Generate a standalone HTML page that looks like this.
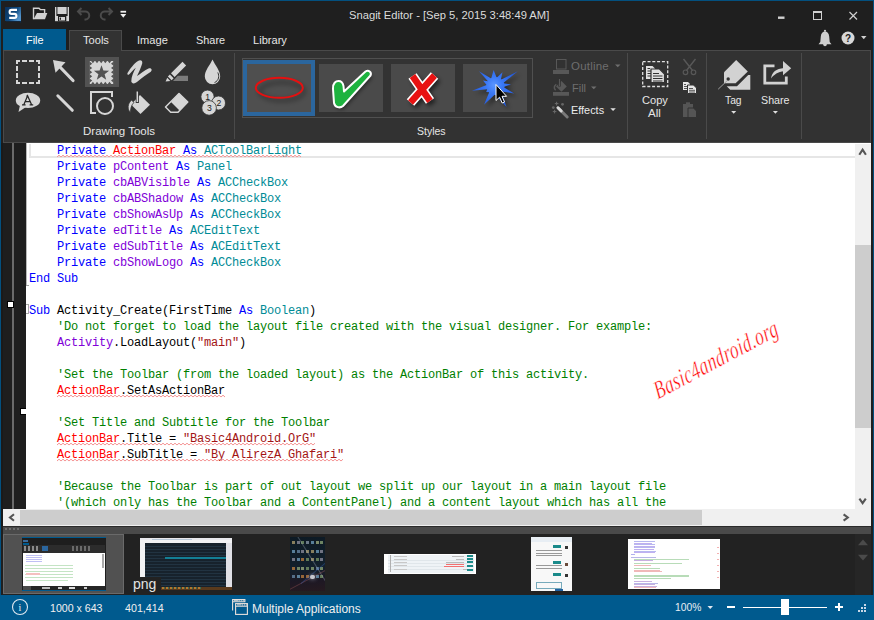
<!DOCTYPE html>
<html><head><meta charset="utf-8">
<style>
*{margin:0;padding:0;box-sizing:border-box}
html,body{width:874px;height:620px;overflow:hidden;background:#1f1f1f;font-family:"Liberation Sans",sans-serif}
.a{position:absolute}
.t{position:absolute;color:#e6e6e6;white-space:nowrap;line-height:1;font-size:11px}
#code{position:absolute;left:26px;top:143px;width:829px;height:366px;background:#fff;overflow:hidden}
.ln{position:absolute;left:3px;height:16px;font-family:"Liberation Mono",monospace;font-size:12px;letter-spacing:-0.2px;line-height:16px;white-space:pre;color:#000}
.k{color:#0000ff}.r{color:#ff0000}.p{color:#8000d8}.c{color:#008b96}.g{color:#008000}.s{color:#a31515}
svg{position:absolute;left:0;top:0;overflow:visible}
</style></head><body>
<!-- window frame -->
<div class="a" style="left:0;top:0;width:874px;height:620px;background:#03507f"></div>
<div class="a" style="left:1px;top:1px;width:872px;height:619px;background:#1f1f1f"></div>

<!-- logo -->
<svg width="874" height="620">
<defs><linearGradient id="lg" x1="0" y1="0" x2="1" y2="0.6"><stop offset="0" stop-color="#0a3059"/><stop offset="0.6" stop-color="#0d477c"/><stop offset="1" stop-color="#5292c8"/></linearGradient></defs>
<rect x="5" y="7" width="16" height="14" fill="url(#lg)"/>
<path d="M6,21 H21 V23 L19.5,21.5 H6 Z" fill="#0a2d50"/>
<path d="M17,9.9 H11.6 Q9.6,9.9 9.6,11.9 Q9.6,13.9 11.6,13.9 H14.4 Q16.4,13.9 16.4,15.9 Q16.4,17.9 14.4,17.9 H9.2" fill="none" stroke="#fff" stroke-width="2.1"/>
</svg>
<!-- title -->
<div class="t" style="left:349px;top:10px;font-size:11.2px;color:#dcdcdc">Snagit Editor - [Sep 5, 2015 3:48:49 AM]</div>

<!-- tabs -->
<div class="a" style="left:3px;top:29px;width:63px;height:21px;background:#005a8e"></div>
<div class="t" style="left:26px;top:35px;font-size:10.9px;color:#fff">File</div>
<div class="a" style="left:69px;top:30px;width:53px;height:21px;background:#323232;border:1px solid #4a4a4a;border-bottom:none"></div>
<div class="t" style="left:83px;top:35px;font-size:11.1px">Tools</div>
<div class="t" style="left:137px;top:35px;font-size:11.1px">Image</div>
<div class="t" style="left:196px;top:35px;font-size:10.9px">Share</div>
<div class="t" style="left:253px;top:35px;font-size:11.1px">Library</div>

<!-- ribbon panel -->
<div class="a" style="left:3px;top:50px;width:868px;height:93px;background:#323232;border:1px solid #4a4a4a"></div>
<div class="a" style="left:70px;top:50px;width:51px;height:1px;background:#323232"></div>
<div class="t" style="left:83px;top:126px;font-size:11.5px">Drawing Tools</div>
<div class="t" style="left:417px;top:126px;font-size:10.5px">Styles</div>
<div class="a" style="left:234px;top:53px;width:1px;height:86px;background:#4a4a4a"></div>
<div class="a" style="left:627px;top:53px;width:1px;height:86px;background:#4a4a4a"></div>
<div class="a" style="left:706px;top:53px;width:1px;height:86px;background:#4a4a4a"></div>
<div class="a" style="left:801px;top:53px;width:1px;height:86px;background:#4a4a4a"></div>

<!-- stamp highlight -->
<div class="a" style="left:85px;top:57px;width:34px;height:30px;background:#525252"></div>

<!-- styles gallery -->
<div class="a" style="left:242px;top:58px;width:291px;height:60px;border:1px solid #505050;background:#333"></div>
<div class="a" style="left:243px;top:60px;width:72px;height:56px;background:#2b669e"></div>
<div class="a" style="left:247px;top:64px;width:64px;height:48px;background:#4f4f4f"></div>
<div class="a" style="left:319px;top:64px;width:64px;height:48px;background:#4a4a4a"></div>
<div class="a" style="left:391px;top:64px;width:64px;height:48px;background:#4a4a4a"></div>
<div class="a" style="left:463px;top:64px;width:64px;height:48px;background:#4a4a4a"></div>

<!-- outline/fill/effects text -->
<div class="t" style="left:571px;top:61px;font-size:11.5px;letter-spacing:0.2px;color:#6e6e6e">Outline</div>
<div class="t" style="left:572px;top:83px;font-size:11px;color:#6e6e6e">Fill</div>
<div class="t" style="left:571px;top:105px;font-size:10.9px;color:#ececec">Effects</div>
<div class="t" style="left:642px;top:95px;font-size:11.1px">Copy</div>
<div class="t" style="left:648px;top:108px;font-size:11.5px">All</div>
<div class="t" style="left:725px;top:96px;font-size:10.3px">Tag</div>
<div class="t" style="left:761px;top:95px;font-size:10.7px">Share</div>
<svg width="874" height="620" viewBox="0 0 874 620">
<defs>
<filter id="sh" x="-50%" y="-50%" width="200%" height="200%"><feGaussianBlur stdDeviation="2.2"/></filter>
<radialGradient id="bl" gradientUnits="userSpaceOnUse" cx="494" cy="85" r="24"><stop offset="0" stop-color="#5a95ff"/><stop offset="0.35" stop-color="#3a78f5"/><stop offset="1" stop-color="#2258d8"/></radialGradient>
</defs>
<!-- QAT -->
<g fill="#d2d2d2" stroke="none">
<path d="M33.5,19.2 V8.3 H39 L40.3,9.6 H44.6 V13" fill="none" stroke="#d2d2d2" stroke-width="1.4"/>
<path d="M33.5,19.3 L37,13 H47.3 L45,19.3 Z"/>
<rect x="55" y="7" width="14" height="14.2"/>
<rect x="56.4" y="7" width="1" height="7" fill="#1f1f1f"/>
<rect x="66.6" y="7" width="1" height="7" fill="#1f1f1f"/>
<rect x="56.4" y="14" width="11.2" height="2" fill="#1f1f1f"/>
<rect x="58" y="16" width="8.3" height="5.2" fill="#1f1f1f"/>
<rect x="59" y="17" width="6" height="3.5"/>
<rect x="59.7" y="17.6" width="1.3" height="2.2" fill="#1f1f1f"/>
</g>
<g fill="none" stroke="#4b4b4b" stroke-width="2">
<path d="M81.5,8 L78,11.5 L81.5,15 M78.5,11.5 H85 A4,4 0 0 1 85.5,19.5 L84.5,19.7"/>
<path d="M108.5,8 L112,11.5 L108.5,15 M111.5,11.5 H105 A4,4 0 0 0 104.5,19.5 L105.5,19.7"/>
</g>
<rect x="120.5" y="10.8" width="5.6" height="1.8" fill="#f0f0f0"/>
<path d="M120.3,14 H126.2 L123.25,17.8 Z" fill="#f0f0f0"/>
<!-- window controls -->
<rect x="778" y="16.5" width="6.5" height="2.4" fill="#d0d0d0"/>
<rect x="813.5" y="11.5" width="8" height="8" fill="none" stroke="#d0d0d0" stroke-width="1"/>
<rect x="813" y="11" width="9" height="2" fill="#d0d0d0"/>
<path d="M849.5,12 L857,19.5 M857,12 L849.5,19.5" stroke="#d0d0d0" stroke-width="1.2"/>
<path d="M818.5,44.2 L820.3,42 L820.8,36.5 C821,33 823,31.5 825,31.5 C827,31.5 829,33 829.2,36.5 L829.7,42 L831.5,44.2 Z" fill="#d0d0d0"/>
<circle cx="825" cy="30.8" r="1.1" fill="#d0d0d0"/>
<circle cx="825" cy="44.5" r="1.8" fill="#d0d0d0"/>
<circle cx="848" cy="38" r="6.5" fill="#d8d8d8"/>
<text x="848" y="41.8" font-family="Liberation Sans" font-weight="bold" font-size="10" fill="#222" text-anchor="middle">?</text>
<path d="M861,36 H866.5 L863.75,39.2 Z" fill="#d0d0d0"/>

<!-- drawing tools -->
<g stroke="#d6d6d6" stroke-width="2" fill="none">
<path d="M16,61 H20 M22,61 H27 M29,61 H34 M36,61 H40 M16,83 H20 M22,83 H27 M29,83 H34 M36,83 H40 M17,60 V64 M17,66 V71 M17,73 V78 M17,80 V84 M39,60 V64 M39,66 V71 M39,73 V78 M39,80 V84"/>
</g>
<path d="M53,60 L65.5,62.2 L55.5,72.8 Z" fill="#d6d6d6"/>
<path d="M59,66 L73,80.5" stroke="#d6d6d6" stroke-width="3.2" stroke-linecap="round"/>
<!-- stamp -->
<rect x="89.8" y="61" width="23.4" height="23" fill="#d6d6d6"/>
<path d="M90.8,60.5 L95.0,60.5 L92.9,63.2 Z M90.8,84.5 L95.0,84.5 L92.9,81.8 Z M94.9,60.5 L99.1,60.5 L97.0,63.2 Z M94.9,84.5 L99.1,84.5 L97.0,81.8 Z M99.1,60.5 L103.3,60.5 L101.2,63.2 Z M99.1,84.5 L103.3,84.5 L101.2,81.8 Z M103.2,60.5 L107.4,60.5 L105.3,63.2 Z M103.2,84.5 L107.4,84.5 L105.3,81.8 Z M107.4,60.5 L111.6,60.5 L109.5,63.2 Z M107.4,84.5 L111.6,84.5 L109.5,81.8 Z M89.5,61.6 L89.5,65.8 L92.2,63.7 Z M113.7,61.6 L113.7,65.8 L111,63.7 Z M89.5,65.9 L89.5,70.1 L92.2,68.0 Z M113.7,65.9 L113.7,70.1 L111,68.0 Z M89.5,70.1 L89.5,74.3 L92.2,72.2 Z M113.7,70.1 L113.7,74.3 L111,72.2 Z M89.5,74.2 L89.5,78.4 L92.2,76.3 Z M113.7,74.2 L113.7,78.4 L111,76.3 Z M89.5,78.5 L89.5,82.7 L92.2,80.6 Z M113.7,78.5 L113.7,82.7 L111,80.6 Z" fill="#525252"/>
<polygon points="101.5,65.2 103.4,70.5 109.1,70.7 104.6,74.2 106.2,79.7 101.5,76.5 96.8,79.7 98.4,74.2 93.9,70.7 99.6,70.5" fill="#525252"/>
<!-- pen -->
<path d="M127.5,73 C130,69 134,63.5 138,61 C140.5,59.5 142.8,60.5 142.2,63.5 C141.2,67 139.2,71.5 137,76 C140.2,74 145,70.3 148.5,68.6 C151,67.6 152.8,69.8 150.8,71.8 C147.2,74.3 142,77.8 138.2,81 C135.2,83.8 132,84.3 131.3,81.6 C131.2,77 133.5,72 135.8,67.8 C133,70.2 130.5,73 129,74.6 C128,75.4 126.9,74.3 127.5,73 Z" fill="#d6d6d6"/>
<!-- highlighter -->
<path d="M182.5,61.8 L186.1,65.4 L174.6,76.9 L171,73.3 Z" fill="#d6d6d6"/>
<path d="M169.9,74.5 L173.6,78.2 L171.6,80.3 L167.9,76.6 Z" fill="#d6d6d6"/>
<path d="M167.2,77.8 L170.4,80.9 L165.6,81.4 Z" fill="#d6d6d6"/>
<path d="M177.7,75.8 H188 V81 H173 Z" fill="#7c7c7c"/>
<!-- drop -->
<path d="M212.5,59.5 C210,65 204.8,70.5 204.8,76.5 A7.7,7.7 0 0 0 220.2,76.5 C220.2,70.5 215,65 212.5,59.5 Z" fill="#d6d6d6"/>
<path d="M217.8,72.5 C219.5,76 219,80.5 214.5,82.6" fill="none" stroke="#323232" stroke-width="1"/>
<!-- callout -->
<ellipse cx="28" cy="100.4" rx="12.2" ry="7.6" fill="#d6d6d6"/>
<path d="M20,105 L26,107 L18.5,112 Z" fill="#d6d6d6"/>
<path d="M23.8,104.8 L27.6,95.8 L31.6,104.8 M25.2,101.5 H30.1 M22,104.8 H25.6 M29.6,104.8 H33.2" fill="none" stroke="#262626" stroke-width="1.25"/><path d="M26.3,96 H28" stroke="#262626" stroke-width="1"/>
<!-- line -->
<path d="M57.8,95.8 L72.3,110.3" stroke="#d6d6d6" stroke-width="3" stroke-linecap="round"/>
<!-- shape -->
<path d="M112,97 V92 H91 V113 H96" fill="none" stroke="#d6d6d6" stroke-width="2"/>
<circle cx="105" cy="106" r="8" fill="none" stroke="#d6d6d6" stroke-width="2"/>
<!-- bucket -->
<path d="M140,95 L150,104.7 L140.5,114 L131,104.5 Z" fill="#d6d6d6"/>
<path d="M137.3,91 V103" stroke="#323232" stroke-width="3.2"/>
<path d="M137.3,91.5 V102" stroke="#d6d6d6" stroke-width="1.5"/>
<path d="M131.5,100.3 C127.5,103.5 127,109.5 130.5,112.5 C130.5,109 131,105.5 134,102.3 Z" fill="#d6d6d6" stroke="#323232" stroke-width="0.8"/>
<!-- eraser -->
<path d="M179,93.5 L187.8,102 L178,112.3 L170.7,112.3 L165.5,107 Z" fill="none" stroke="#d6d6d6" stroke-width="1.5" stroke-linejoin="round"/>
<path d="M179,93.5 L187.8,102 L179.5,110.5 L171,102 Z" fill="#d6d6d6"/>
<!-- numbers -->
<g stroke="#323232" stroke-width="0.8" fill="#d6d6d6">
<circle cx="207.5" cy="96.7" r="6.6"/>
<circle cx="218.5" cy="103" r="7"/>
<circle cx="209.1" cy="107.9" r="7.3"/>
</g>
<g font-family="Liberation Sans" font-size="8.6" fill="#202020" text-anchor="middle">
<text x="207.6" y="100">1</text><text x="218.8" y="106.2">2</text><text x="209.3" y="111">3</text>
</g>
<!-- styles -->
<ellipse cx="282" cy="91.5" rx="22" ry="9" fill="none" stroke="#000" stroke-opacity="0.22" stroke-width="5" filter="url(#sh)"/>
<ellipse cx="279.3" cy="87.8" rx="23.5" ry="10" fill="none" stroke="#e51010" stroke-width="2"/>
<path d="M335.5,92 C335,86 338,84 340.5,84 C344,84 345,86.5 345.5,89 L346,94.5 L367,75 C369.5,73.5 372.5,75 371.7,78 L344,108.5 C341.5,110.5 337,109.5 336,105.5 Z" fill="#000" fill-opacity="0.5" filter="url(#sh)"/>
<path d="M333,89 C332.5,83 336,81 338.5,81 C342,81 343,83.5 343.5,86 L344,91.5 L365.5,71.5 C368.5,69.5 372,72 370.5,75.5 L343,106 C340,108.5 335,107.5 334,103 Z" fill="#1db33f" stroke="#fff" stroke-width="2" stroke-linejoin="round"/>
<g transform="translate(2.5,3)" filter="url(#sh)" opacity="0.55"><path d="M412.5,76 L430,101 M434.5,75.5 L410.5,102.5" stroke="#000" stroke-width="9"/></g>
<path d="M412.5,76 L430,101 M434.5,75.5 L410.5,102.5" stroke="#fff" stroke-width="10"/>
<path d="M412.5,76 L430,101 M434.5,75.5 L410.5,102.5" stroke="#e81212" stroke-width="6.6"/>
<polygon transform="translate(3,3)" filter="url(#sh)" fill="#000" fill-opacity="0.45" points="472.0,90.7 486.6,85.0 483.0,80.5 487.9,81.3 479.0,71.3 491.2,78.4 493.6,70.0 496.7,77.7 502.5,72.2 500.8,79.8 517.8,71.3 503.0,83.2 511.0,84.4 503.4,87.1 514.2,93.4 501.4,91.6 506.5,107.0 494.9,94.5 484.0,104.7 489.2,92.2 486.2,92.0 487.2,89.3"/>
<polygon fill="url(#bl)" points="472.0,90.7 486.6,85.0 483.0,80.5 487.9,81.3 479.0,71.3 491.2,78.4 493.6,70.0 496.7,77.7 502.5,72.2 500.8,79.8 517.8,71.3 503.0,83.2 511.0,84.4 503.4,87.1 514.2,93.4 501.4,91.6 506.5,107.0 494.9,94.5 484.0,104.7 489.2,92.2 486.2,92.0 487.2,89.3"/>
<circle cx="495.5" cy="86" r="9" fill="url(#bl)"/>
<path d="M496,84.5 V100.5 L499.6,97.2 L502.2,103 L504.5,102 L502,96.3 L506.6,96.3 Z" fill="#000" stroke="#fff" stroke-width="1"/>
<!-- outline fill effects icons -->
<rect x="556.5" y="59.5" width="9.5" height="9.5" fill="none" stroke="#585858" stroke-width="1"/>
<rect x="553" y="70" width="16" height="4" fill="#585858"/>
<path d="M615,64.5 H620.5 L617.75,67.3 Z" fill="#6e6e6e"/>
<rect x="553" y="92" width="16" height="3.8" fill="#585858"/>
<path d="M561.5,81 L566.8,86.4 L561.4,91.8 L556,86.4 Z" fill="#585858"/>
<path d="M559.5,78.5 V86.5" stroke="#323232" stroke-width="2.6"/>
<path d="M559.5,79 V86" stroke="#585858" stroke-width="1.2"/>
<path d="M556.3,84.3 C554,85.5 553.6,88.5 555.6,90.2" fill="none" stroke="#585858" stroke-width="1.5"/>
<path d="M591,86.5 H596.5 L593.75,89.3 Z" fill="#6e6e6e"/>
<path d="M558,107.8 L567.2,117" stroke="#7a7a7a" stroke-width="3" stroke-linecap="round"/>
<path d="M558,107.8 L561.2,111" stroke="#d8d8d8" stroke-width="3" stroke-linecap="round"/>
<path d="M556.6,101.8 V105.4 M554.8,103.6 H558.4 M554.6,109.8 V113.4 M552.8,111.6 H556.4" stroke="#6a6a6a" stroke-width="1"/>
<circle cx="562.5" cy="104.3" r="1.4" fill="#666"/>
<circle cx="553.3" cy="107.6" r="1.4" fill="#666"/>
<path d="M610.3,108.3 H615.8 L613.05,111.1 Z" fill="#e0e0e0"/>
<!-- copy all -->
<rect x="642.7" y="61.7" width="25" height="24.8" fill="none" stroke="#e0e0e0" stroke-width="1.3" stroke-dasharray="3,1.8"/>
<path d="M646,66 H652.5 L655,68.5 V79 H646 Z" fill="#e0e0e0"/>
<path d="M647.5,68.5 H650 M647.5,71 H651 M647.5,73.5 H651 M647.5,76 H651" stroke="#323232" stroke-width="1"/>
<path d="M651,69 H659.5 L664.5,74 V82.5 H651 Z" fill="#e0e0e0" stroke="#323232" stroke-width="1.2"/>
<path d="M653,73.5 H659 M653,76 H662.5 M653,78.5 H662.5 M653,81 H662.5" stroke="#323232" stroke-width="1"/>
<path d="M683.5,59 L692.5,70.5 M695.5,59 L686.5,70.5" stroke="#585858" stroke-width="1.4"/>
<circle cx="685.5" cy="72.3" r="2.3" fill="none" stroke="#585858" stroke-width="1.2"/>
<circle cx="693.5" cy="72.3" r="2.3" fill="none" stroke="#585858" stroke-width="1.2"/>
<path d="M683,82 H688 L690,84 V90 H683 Z" fill="#e6e6e6"/>
<path d="M684,84.5 H686 M684,86.5 H687 M684,88.5 H687" stroke="#323232" stroke-width="0.8"/>
<path d="M687.5,85 H693.5 L696.5,88 V93.5 H687.5 Z" fill="#e6e6e6" stroke="#323232" stroke-width="1"/>
<path d="M689,88.5 H693 M689,90.3 H695 M689,92 H695" stroke="#323232" stroke-width="0.8"/>
<rect x="683" y="104" width="10" height="13" fill="#555"/>
<rect x="686" y="102.3" width="4" height="2.5" fill="#555"/>
<path d="M688,108 H693.5 L696.5,111 V117.5 H688 Z" fill="#555" stroke="#323232" stroke-width="1"/>
<!-- tag -->
<path d="M736.2,60 L747.8,71.4 L735.6,83.2 H724 V72.2 Z" fill="#d2d2d2"/>
<path d="M748.2,75 H750.3 V89.7 H730.2 L726.7,86.2 H737 Z" fill="#d2d2d2"/>
<circle cx="728.2" cy="79" r="1.7" fill="#323232"/>
<path d="M718.2,89.2 L727,80.8" stroke="#a0a0a0" stroke-width="1"/>
<path d="M731.2,111 H736.2 L733.7,113.8 Z" fill="#e0e0e0"/>
<!-- share -->
<path d="M774.5,65.8 H764.8 V83.2 H786.3 V76.5" fill="none" stroke="#d2d2d2" stroke-width="2.8"/>
<path d="M771,78.5 C772,72 776,68.8 784,68 V71.2 C778,71.8 774,74.5 771,78.5 Z" fill="#d2d2d2"/>
<path d="M783,61 L791.2,68.3 L783,75.2 Z" fill="#d2d2d2"/>
<path d="M772.9,111 H777.9 L775.4,113.8 Z" fill="#e0e0e0"/>
</svg>

<!-- gutter -->
<div class="a" style="left:1px;top:143px;width:2px;height:383px;background:#1a1a1a"></div>
<div class="a" style="left:3px;top:143px;width:9px;height:366px;background:#1e1e1e"></div>
<div class="a" style="left:12px;top:143px;width:2px;height:366px;background:#6a6a6a"></div>
<div class="a" style="left:14px;top:143px;width:12px;height:366px;background:#1e1e1e"></div>
<div class="a" style="left:7.5px;top:302px;width:5px;height:5px;background:#fff;outline:1px solid #000"></div>
<div class="a" style="left:20.5px;top:408.5px;width:5px;height:5px;background:#fff;outline:1px solid #000"></div>

<div id="code">
<div class="a" style="left:3px;top:1px;width:826px;height:14px;border:2px solid #e6e6e6;border-top:none;border-right:none"></div>
<div class="a" style="left:0;top:0;width:1px;height:143px;background:#b8b8b8"></div>
<div class="a" style="left:0;top:142px;width:3px;height:1px;background:#a0a0a0"></div>
<div class="a" style="left:0;top:161px;width:3px;height:10px;border:1px solid #a8a8a8;border-left:none"></div>
<div class="ln" style="top:0px">    <span class="k">Private</span> <span class="r">ActionBar</span> <span class="k">As</span> <span class="c">ACToolBarLight</span></div>
<div class="ln" style="top:16px">    <span class="k">Private</span> <span class="p">pContent</span> <span class="k">As</span> <span class="c">Panel</span></div>
<div class="ln" style="top:32px">    <span class="k">Private</span> <span class="p">cbABVisible</span> <span class="k">As</span> <span class="c">ACCheckBox</span></div>
<div class="ln" style="top:48px">    <span class="k">Private</span> <span class="p">cbABShadow</span> <span class="k">As</span> <span class="c">ACCheckBox</span></div>
<div class="ln" style="top:64px">    <span class="k">Private</span> <span class="p">cbShowAsUp</span> <span class="k">As</span> <span class="c">ACCheckBox</span></div>
<div class="ln" style="top:80px">    <span class="k">Private</span> <span class="p">edTitle</span> <span class="k">As</span> <span class="c">ACEditText</span></div>
<div class="ln" style="top:96px">    <span class="k">Private</span> <span class="p">edSubTitle</span> <span class="k">As</span> <span class="c">ACEditText</span></div>
<div class="ln" style="top:112px">    <span class="k">Private</span> <span class="p">cbShowLogo</span> <span class="k">As</span> <span class="c">ACCheckBox</span></div>
<div class="ln" style="top:128px"><span class="k">End Sub</span></div>
<div class="ln" style="top:144px"></div>
<div class="ln" style="top:160px"><span class="k">Sub</span> Activity_Create(FirstTime <span class="k">As</span> <span class="c">Boolean</span>)</div>
<div class="ln" style="top:176px">    <span class="g">&#x27;Do not forget to load the layout file created with the visual designer. For example:</span></div>
<div class="ln" style="top:192px">    <span class="p">Activity</span>.LoadLayout(<span class="s">&quot;main&quot;</span>)</div>
<div class="ln" style="top:208px"></div>
<div class="ln" style="top:224px">    <span class="g">&#x27;Set the Toolbar (from the loaded layout) as the ActionBar of this activity.</span></div>
<div class="ln" style="top:240px">    <span class="r">ActionBar</span>.SetAsActionBar</div>
<div class="ln" style="top:256px"></div>
<div class="ln" style="top:272px">    <span class="g">&#x27;Set Title and Subtitle for the Toolbar</span></div>
<div class="ln" style="top:288px">    <span class="r">ActionBar</span>.Title = <span class="s">&quot;Basic4Android.OrG&quot;</span></div>
<div class="ln" style="top:304px">    <span class="r">ActionBar</span>.SubTitle = <span class="s">&quot;By AlirezA Ghafari&quot;</span></div>
<div class="ln" style="top:320px"></div>
<div class="ln" style="top:336px">    <span class="g">&#x27;Because the Toolbar is part of out layout we split up our layout in a main layout file</span></div>
<div class="ln" style="top:352px">    <span class="g">&#x27;(which only has the Toolbar and a ContentPanel) and a content layout which has all the</span></div>

<!-- squiggles -->
<svg width="829" height="366" style="left:0;top:0"><path d="M31,14.0 L33,12.2 L35,14.0 L37,12.2 L39,14.0 L41,12.2 L43,14.0 L45,12.2 L47,14.0 L49,12.2 L51,14.0 L53,12.2 L55,14.0 L57,12.2 L59,14.0 L61,12.2 L63,14.0 L65,12.2 L67,14.0 L69,12.2 L71,14.0 L73,12.2 L75,14.0 L77,12.2 L79,14.0 L81,12.2 L83,14.0 L85,12.2 L87,14.0 L89,12.2 L91,14.0 L93,12.2 L95,14.0 L97,12.2 L99,14.0 L101,12.2 L103,14.0 L105,12.2 L107,14.0 L109,12.2 L111,14.0 L113,12.2 L115,14.0 L117,12.2 L119,14.0 L121,12.2 L123,14.0 L125,12.2 L127,14.0 L129,12.2 L131,14.0 L133,12.2 L135,14.0 L137,12.2 L139,14.0 L141,12.2 L143,14.0 L145,12.2 L147,14.0 L149,12.2 L151,14.0 L153,12.2 L155,14.0 L157,12.2 L159,14.0 L161,12.2 L163,14.0 L165,12.2 L167,14.0 L169,12.2 L171,14.0 L173,12.2 L175,14.0 L177,12.2 L179,14.0 L181,12.2 L183,14.0 L185,12.2 L187,14.0 L189,12.2 L191,14.0 L193,12.2 L195,14.0 L197,12.2 L199,14.0 L201,12.2 L203,14.0 L205,12.2 L207,14.0 L209,12.2 L211,14.0 L213,12.2 L215,14.0 L217,12.2 L219,14.0 L221,12.2 L223,14.0 L225,12.2 L227,14.0 L229,12.2 L231,14.0 L233,12.2 L235,14.0 L237,12.2 L239,14.0 L241,12.2 L243,14.0 L245,12.2 L247,14.0 L249,12.2 L251,14.0 L253,12.2 L255,14.0 L257,12.2 L259,14.0 L261,12.2 L263,14.0 L265,12.2 L267,14.0 L269,12.2 L271,14.0 L273,12.2 L275,14.0 M31,254.0 L33,252.2 L35,254.0 L37,252.2 L39,254.0 L41,252.2 L43,254.0 L45,252.2 L47,254.0 L49,252.2 L51,254.0 L53,252.2 L55,254.0 L57,252.2 L59,254.0 L61,252.2 L63,254.0 L65,252.2 L67,254.0 L69,252.2 L71,254.0 L73,252.2 L75,254.0 L77,252.2 L79,254.0 L81,252.2 L83,254.0 L85,252.2 L87,254.0 L89,252.2 L91,254.0 L93,252.2 L95,254.0 L97,252.2 L99,254.0 L101,252.2 L103,254.0 L105,252.2 L107,254.0 L109,252.2 L111,254.0 L113,252.2 L115,254.0 L117,252.2 L119,254.0 L121,252.2 L123,254.0 L125,252.2 L127,254.0 L129,252.2 L131,254.0 L133,252.2 L135,254.0 L137,252.2 L139,254.0 L141,252.2 L143,254.0 L145,252.2 L147,254.0 L149,252.2 L151,254.0 L153,252.2 L155,254.0 L157,252.2 L159,254.0 L161,252.2 L163,254.0 L165,252.2 L167,254.0 L169,252.2 L171,254.0 L173,252.2 L175,254.0 L177,252.2 L179,254.0 L181,252.2 L183,254.0 L185,252.2 L187,254.0 L189,252.2 L191,254.0 L193,252.2 L195,254.0 L197,252.2 L199,254.0 M31,302.0 L33,300.2 L35,302.0 L37,300.2 L39,302.0 L41,300.2 L43,302.0 L45,300.2 L47,302.0 L49,300.2 L51,302.0 L53,300.2 L55,302.0 L57,300.2 L59,302.0 L61,300.2 L63,302.0 L65,300.2 L67,302.0 L69,300.2 L71,302.0 L73,300.2 L75,302.0 L77,300.2 L79,302.0 L81,300.2 L83,302.0 L85,300.2 L87,302.0 L89,300.2 L91,302.0 L93,300.2 L95,302.0 L97,300.2 L99,302.0 L101,300.2 L103,302.0 L105,300.2 L107,302.0 L109,300.2 L111,302.0 L113,300.2 L115,302.0 L117,300.2 L119,302.0 L121,300.2 L123,302.0 L125,300.2 L127,302.0 L129,300.2 L131,302.0 L133,300.2 L135,302.0 L137,300.2 L139,302.0 L141,300.2 L143,302.0 L145,300.2 L147,302.0 L149,300.2 L151,302.0 L153,300.2 L155,302.0 L157,300.2 L159,302.0 L161,300.2 L163,302.0 L165,300.2 L167,302.0 L169,300.2 L171,302.0 L173,300.2 L175,302.0 L177,300.2 L179,302.0 L181,300.2 L183,302.0 L185,300.2 L187,302.0 L189,300.2 L191,302.0 L193,300.2 L195,302.0 L197,300.2 L199,302.0 L201,300.2 L203,302.0 L205,300.2 L207,302.0 L209,300.2 L211,302.0 L213,300.2 L215,302.0 L217,300.2 L219,302.0 L221,300.2 L223,302.0 L225,300.2 L227,302.0 L229,300.2 L231,302.0 L233,300.2 L235,302.0 L237,300.2 L239,302.0 L241,300.2 L243,302.0 L245,300.2 L247,302.0 L249,300.2 L251,302.0 L253,300.2 L255,302.0 L257,300.2 L259,302.0 L261,300.2 L263,302.0 L265,300.2 L267,302.0 L269,300.2 L271,302.0 L273,300.2 L275,302.0 L277,300.2 L279,302.0 L281,300.2 L283,302.0 L285,300.2 L287,302.0 L289,300.2 M31,318.0 L33,316.2 L35,318.0 L37,316.2 L39,318.0 L41,316.2 L43,318.0 L45,316.2 L47,318.0 L49,316.2 L51,318.0 L53,316.2 L55,318.0 L57,316.2 L59,318.0 L61,316.2 L63,318.0 L65,316.2 L67,318.0 L69,316.2 L71,318.0 L73,316.2 L75,318.0 L77,316.2 L79,318.0 L81,316.2 L83,318.0 L85,316.2 L87,318.0 L89,316.2 L91,318.0 L93,316.2 L95,318.0 L97,316.2 L99,318.0 L101,316.2 L103,318.0 L105,316.2 L107,318.0 L109,316.2 L111,318.0 L113,316.2 L115,318.0 L117,316.2 L119,318.0 L121,316.2 L123,318.0 L125,316.2 L127,318.0 L129,316.2 L131,318.0 L133,316.2 L135,318.0 L137,316.2 L139,318.0 L141,316.2 L143,318.0 L145,316.2 L147,318.0 L149,316.2 L151,318.0 L153,316.2 L155,318.0 L157,316.2 L159,318.0 L161,316.2 L163,318.0 L165,316.2 L167,318.0 L169,316.2 L171,318.0 L173,316.2 L175,318.0 L177,316.2 L179,318.0 L181,316.2 L183,318.0 L185,316.2 L187,318.0 L189,316.2 L191,318.0 L193,316.2 L195,318.0 L197,316.2 L199,318.0 L201,316.2 L203,318.0 L205,316.2 L207,318.0 L209,316.2 L211,318.0 L213,316.2 L215,318.0 L217,316.2 L219,318.0 L221,316.2 L223,318.0 L225,316.2 L227,318.0 L229,316.2 L231,318.0 L233,316.2 L235,318.0 L237,316.2 L239,318.0 L241,316.2 L243,318.0 L245,316.2 L247,318.0 L249,316.2 L251,318.0 L253,316.2 L255,318.0 L257,316.2 L259,318.0 L261,316.2 L263,318.0 L265,316.2 L267,318.0 L269,316.2 L271,318.0 L273,316.2 L275,318.0 L277,316.2 L279,318.0 L281,316.2 L283,318.0 L285,316.2 L287,318.0 L289,316.2 L291,318.0 L293,316.2 L295,318.0 L297,316.2 L299,318.0 L301,316.2 L303,318.0 L305,316.2 L307,318.0 L309,316.2 L311,318.0 L313,316.2 L315,318.0 L317,316.2" fill="none" stroke="#f59595" stroke-width="1"/></svg>
<div class="a" style="left:624px;top:237px;font-family:'Liberation Serif',serif;font-style:italic;font-size:18px;color:#ff0000;-webkit-text-stroke:0.3px #fff;letter-spacing:0.5px;white-space:nowrap;transform:rotate(-28deg) scale(0.97,1.4) skewX(-8deg);transform-origin:0 0;line-height:1">Basic4android.org</div>
</div>

<!-- v scrollbar -->
<div class="a" style="left:855px;top:143px;width:16px;height:367px;background:#fff"></div><div class="a" style="left:855px;top:144px;width:16px;height:366px;background:#f0f0f0"></div>
<div class="a" style="left:855px;top:245px;width:16px;height:183px;background:#cdcdcd"></div>

<!-- h scrollbar -->
<div class="a" style="left:3px;top:509px;width:868px;height:17px;background:#f0f0f0"></div>
<div class="a" style="left:20px;top:510px;width:682px;height:15px;background:#cdcdcd"></div>

<svg width="874" height="620">
<path d="M859.3,154.8 L862.6,149.6 L865.9,154.8" fill="none" stroke="#555" stroke-width="2.1"/>
<path d="M859.4,498.6 L862.6,503.2 L865.8,498.6" fill="none" stroke="#555" stroke-width="2.1"/>
<path d="M14,514.3 L10,517.5 L14,520.7" fill="none" stroke="#555" stroke-width="2.1"/>
<path d="M843.6,514.3 L847.8,517.5 L843.6,520.7" fill="none" stroke="#555" stroke-width="2.1"/>
</svg>
<!-- tray -->
<div class="a" style="left:3px;top:526px;width:868px;height:1px;background:#2a2a2a"></div>
<div class="a" style="left:3px;top:527px;width:868px;height:7px;background:#4a4a4a"></div>
<div class="a" style="left:5px;top:528px;width:2px;height:2px;background:#6e6e6e"></div>
<div class="a" style="left:9px;top:528px;width:2px;height:2px;background:#6e6e6e"></div>
<div class="a" style="left:13px;top:528px;width:2px;height:2px;background:#6e6e6e"></div>
<div class="a" style="left:17px;top:528px;width:2px;height:2px;background:#6e6e6e"></div>
<div class="a" style="left:3px;top:534px;width:868px;height:61px;background:#222"></div>
<div class="a" style="left:855px;top:534px;width:16px;height:61px;background:#262626"></div>
<svg width="874" height="620"><path d="M858,545.2 H868 L863,539.4 Z M858,554.8 H868 L863,560.6 Z" fill="#4a4a4a"/></svg>
<div class="a" style="left:3px;top:534px;width:121px;height:60px;background:#515151;border:1px solid #6a6a6a"></div>
<!-- thumb1 -->
<div class="a" style="left:22px;top:537px;width:84px;height:54px;background:#1e1e1e;overflow:hidden">
 <div class="a" style="left:0;top:0;width:84px;height:1px;background:#005a8e"></div>
 <div class="a" style="left:1px;top:3px;width:5px;height:2px;background:#3a6a9a"></div>
 <div class="a" style="left:1px;top:6px;width:6px;height:2px;background:#005a8e"></div>
 <div class="a" style="left:1px;top:8px;width:82px;height:8px;background:#2c2c2c"></div>
 <div class="a" style="left:20px;top:9px;width:6px;height:5px;background:#2b669e"></div>
 <div class="a" style="left:2px;top:9px;width:16px;height:5px;background:repeating-linear-gradient(90deg,#8a8a8a 0 2px,transparent 2px 4px)"></div>
 <div class="a" style="left:50px;top:9px;width:20px;height:5px;background:repeating-linear-gradient(90deg,#6a6a6a 0 2px,transparent 2px 4px)"></div>
 <div class="a" style="left:1px;top:16px;width:82px;height:33px;background:#fff"></div>
 <div class="a" style="left:4px;top:18px;width:16px;height:8px;background:repeating-linear-gradient(#c0c0f4 0 1px,transparent 1px 2px)"></div>
 <div class="a" style="left:3px;top:28px;width:48px;height:14px;background:repeating-linear-gradient(#c4e4c4 0 1px,transparent 1px 3px)"></div>
 <div class="a" style="left:4px;top:36px;width:14px;height:2px;background:#f4c0c0"></div>
 <div class="a" style="left:4px;top:43px;width:42px;height:1px;background:#c8e8c8"></div>
 <div class="a" style="left:80px;top:17px;width:2px;height:14px;background:#aaa"></div>
 <div class="a" style="left:1px;top:49px;width:82px;height:4px;background:#252525"></div>
 <div class="a" style="left:1px;top:49px;width:8px;height:4px;background:#4a4a4a"></div>
 <div class="a" style="left:20px;top:50px;width:8px;height:2px;background:#bbb"></div>
 <div class="a" style="left:36px;top:50px;width:4px;height:2px;background:#ccc"></div>
 <div class="a" style="left:47px;top:50px;width:6px;height:2px;background:#ddd"></div>
 <div class="a" style="left:62px;top:50px;width:3px;height:2px;background:#ccc"></div>
 <div class="a" style="left:0;top:53px;width:84px;height:1px;background:#005a8e"></div>
</div>
<!-- thumb2 -->
<div class="a" style="left:140px;top:538px;width:92px;height:52px;background:#f2f2f4;overflow:hidden">
 <div class="a" style="left:0;top:0;width:92px;height:2px;background:#e8e8ec"></div>
 <div class="a" style="left:12px;top:1px;width:40px;height:1px;background:#b8c8d8"></div>
 <div class="a" style="left:5px;top:5px;width:81px;height:44px;background:#17222c"></div>
 <div class="a" style="left:5px;top:6px;width:81px;height:42px;background:repeating-linear-gradient(transparent 0 2px,rgba(60,95,120,.28) 2px 3px)"></div>
 <div class="a" style="left:25px;top:19px;width:61px;height:2px;background:#137f95"></div>
 <div class="a" style="left:86px;top:5px;width:6px;height:44px;background:#e0e0e6"></div>
 <div class="a" style="left:0;top:49px;width:92px;height:3px;background:#5a3a1c"></div>
 <div class="a" style="left:22px;top:49px;width:40px;height:2px;background:repeating-linear-gradient(90deg,#b07830 0 2px,#3a6a50 2px 3px,transparent 3px 4px)"></div>
</div>
<div class="a" style="left:128px;top:577px;width:33px;height:18px;background:#222"></div>
<div class="t" style="left:133px;top:577px;font-size:14px;color:#e4e4e4">png</div>
<!-- thumb3 -->
<div class="a" style="left:290px;top:537px;width:35px;height:54px;background:linear-gradient(175deg,#0d1a24,#12202c 55%,#1d1824 80%,#261a20);overflow:hidden">
<div class="a" style="left:2.0px;top:4.0px;width:3px;height:3px;background:#b0a070;opacity:.75"></div>
<div class="a" style="left:6.7px;top:4.0px;width:3px;height:3px;background:#9090a0;opacity:.75"></div>
<div class="a" style="left:11.4px;top:4.0px;width:3px;height:3px;background:#7a9a6a;opacity:.75"></div>
<div class="a" style="left:16.1px;top:4.0px;width:3px;height:3px;background:#8a98a8;opacity:.75"></div>
<div class="a" style="left:20.8px;top:4.0px;width:3px;height:3px;background:#70a0c0;opacity:.75"></div>
<div class="a" style="left:25.5px;top:4.0px;width:3px;height:3px;background:#a0b080;opacity:.75"></div>
<div class="a" style="left:30.2px;top:4.0px;width:3px;height:3px;background:#8fa878;opacity:.75"></div>
<div class="a" style="left:2.0px;top:12.6px;width:3px;height:3px;background:#70a0c0;opacity:.75"></div>
<div class="a" style="left:6.7px;top:12.6px;width:3px;height:3px;background:#6a8aa8;opacity:.75"></div>
<div class="a" style="left:11.4px;top:12.6px;width:3px;height:3px;background:#9090a0;opacity:.75"></div>
<div class="a" style="left:16.1px;top:12.6px;width:3px;height:3px;background:#b0a070;opacity:.75"></div>
<div class="a" style="left:20.8px;top:12.6px;width:3px;height:3px;background:#b0a070;opacity:.75"></div>
<div class="a" style="left:25.5px;top:12.6px;width:3px;height:3px;background:#70a0c0;opacity:.75"></div>
<div class="a" style="left:30.2px;top:12.6px;width:3px;height:3px;background:#9090a0;opacity:.75"></div>
<div class="a" style="left:2.0px;top:21.2px;width:3px;height:3px;background:#9090a0;opacity:.75"></div>
<div class="a" style="left:6.7px;top:21.2px;width:3px;height:3px;background:#70a0c0;opacity:.75"></div>
<div class="a" style="left:11.4px;top:21.2px;width:3px;height:3px;background:#c08040;opacity:.75"></div>
<div class="a" style="left:16.1px;top:21.2px;width:3px;height:3px;background:#7a9a6a;opacity:.75"></div>
<div class="a" style="left:20.8px;top:21.2px;width:3px;height:3px;background:#b0a070;opacity:.75"></div>
<div class="a" style="left:25.5px;top:21.2px;width:3px;height:3px;background:#7a9a6a;opacity:.75"></div>
<div class="a" style="left:30.2px;top:21.2px;width:3px;height:3px;background:#9090a0;opacity:.75"></div>
<div class="a" style="left:2.0px;top:29.8px;width:3px;height:3px;background:#c08040;opacity:.75"></div>
<div class="a" style="left:6.7px;top:29.8px;width:3px;height:3px;background:#8fa878;opacity:.75"></div>
<div class="a" style="left:11.4px;top:29.8px;width:3px;height:3px;background:#a0b080;opacity:.75"></div>
<div class="a" style="left:16.1px;top:29.8px;width:3px;height:3px;background:#7a9a6a;opacity:.75"></div>
<div class="a" style="left:20.8px;top:29.8px;width:3px;height:3px;background:#8fa878;opacity:.75"></div>
<div class="a" style="left:25.5px;top:29.8px;width:3px;height:3px;background:#6a8aa8;opacity:.75"></div>
<div class="a" style="left:30.2px;top:29.8px;width:3px;height:3px;background:#8fa878;opacity:.75"></div>
<div class="a" style="left:2.0px;top:38.4px;width:3px;height:3px;background:#6a8aa8;opacity:.75"></div>
<div class="a" style="left:6.7px;top:38.4px;width:3px;height:3px;background:#70a0c0;opacity:.75"></div>
<div class="a" style="left:11.4px;top:38.4px;width:3px;height:3px;background:#c08040;opacity:.75"></div>
<div class="a" style="left:16.1px;top:38.4px;width:3px;height:3px;background:#c08040;opacity:.75"></div>
<div class="a" style="left:20.8px;top:38.4px;width:3px;height:3px;background:#c08040;opacity:.75"></div>
<div class="a" style="left:25.5px;top:38.4px;width:3px;height:3px;background:#70a0c0;opacity:.75"></div>
<div class="a" style="left:30.2px;top:38.4px;width:3px;height:3px;background:#7a9a6a;opacity:.75"></div>
 <div class="a" style="left:-8px;top:22px;width:60px;height:1px;background:rgba(190,200,220,.3);transform:rotate(58deg)"></div>
 <div class="a" style="left:-8px;top:40px;width:60px;height:1px;background:rgba(200,110,110,.3);transform:rotate(-28deg)"></div>
 <div class="a" style="left:5px;top:30px;width:50px;height:1px;background:rgba(60,110,200,.35);transform:rotate(-40deg)"></div>
 <div class="a" style="left:20px;top:38px;width:5px;height:4px;background:#c8c8d0;border-radius:2px;box-shadow:0 0 4px #aab"></div>
</div>
<!-- thumb4 -->
<div class="a" style="left:384px;top:554px;width:92px;height:20px;background:#fff;overflow:hidden">
 <div class="a" style="left:4px;top:1px;width:86px;height:18px;background:#eff3f6"></div>
 <div class="a" style="left:4px;top:4px;width:86px;height:14px;background:repeating-linear-gradient(transparent 0 2px,#e0e6ea 2px 3px)"></div>
 <div class="a" style="left:6px;top:1px;width:1px;height:17px;background:#b0b0b0"></div>
 <div class="a" style="left:10px;top:2px;width:13px;height:1px;background:#c8c8c8"></div>
 <div class="a" style="left:10px;top:5px;width:13px;height:1px;background:#c8c8c8"></div>
 <div class="a" style="left:10px;top:8px;width:13px;height:1px;background:#c8c8c8"></div>
 <div class="a" style="left:10px;top:11px;width:13px;height:1px;background:#c8c8c8"></div>
 <div class="a" style="left:10px;top:15px;width:13px;height:1px;background:#c8c8c8"></div>
 <div class="a" style="left:68px;top:2px;width:12px;height:1px;background:#bbb"></div>
 <div class="a" style="left:72px;top:5px;width:8px;height:1px;background:#bbb"></div>
 <div class="a" style="left:62px;top:8px;width:18px;height:1px;background:#bbb"></div>
 <div class="a" style="left:79px;top:15px;width:4px;height:1px;background:#bbb"></div>
 <div class="a" style="left:62px;top:10px;width:18px;height:1px;background:#f27070"></div>
 <div class="a" style="left:60px;top:12px;width:20px;height:1px;background:#f27070"></div>
 <div class="a" style="left:83px;top:1px;width:6px;height:2px;background:#1a8a8a"></div>
 <div class="a" style="left:83px;top:4px;width:6px;height:2px;background:#1a8a8a"></div>
 <div class="a" style="left:83px;top:7px;width:6px;height:2px;background:#1a8a8a"></div>
 <div class="a" style="left:83px;top:11px;width:6px;height:2px;background:#1a8a8a"></div>
 <div class="a" style="left:83px;top:15px;width:6px;height:2px;background:#1a8a8a"></div>
</div>
<!-- thumb5 -->
<div class="a" style="left:531px;top:537px;width:41px;height:54px;background:#f8f8f8;overflow:hidden">
 <div class="a" style="left:0;top:0;width:41px;height:5px;background:#e8eef4"></div>
 <div class="a" style="left:22px;top:8px;width:8px;height:3px;background:#1a8a8a"></div>
 <div class="a" style="left:22px;top:24px;width:8px;height:3px;background:#1a8a8a"></div>
 <div class="a" style="left:22px;top:36px;width:8px;height:3px;background:#1a8a8a"></div>
 <div class="a" style="left:34px;top:9px;width:3px;height:3px;background:#333"></div>
 <div class="a" style="left:34px;top:26px;width:3px;height:3px;background:#6a4a3a"></div>
 <div class="a" style="left:34px;top:37px;width:3px;height:3px;background:#333"></div>
 <div class="a" style="left:5px;top:13px;width:26px;height:8px;background:repeating-linear-gradient(#999 0 1px,transparent 1px 2.5px)"></div>
 <div class="a" style="left:5px;top:28px;width:26px;height:5px;background:repeating-linear-gradient(#999 0 1px,transparent 1px 2.5px)"></div>
 <div class="a" style="left:5px;top:45px;width:26px;height:7px;border:1px solid #7ab"></div>
 <div class="a" style="left:24px;top:52px;width:8px;height:2px;background:#2060a0"></div>
</div>
<!-- thumb6 -->
<div class="a" style="left:628px;top:539px;width:92px;height:50px;background:#fff;overflow:hidden">
<div class="a" style="left:5.5px;top:2.0px;width:21.7px;height:1px;background:#b8b8f0"></div>
<div class="a" style="left:5.5px;top:3.6px;width:18.0px;height:1px;background:#c0b0f0"></div>
<div class="a" style="left:5.5px;top:5.2px;width:21.7px;height:1px;background:#b8b8f0"></div>
<div class="a" style="left:5.5px;top:6.8px;width:21.1px;height:1px;background:#c0b0f0"></div>
<div class="a" style="left:5.5px;top:8.4px;width:21.1px;height:1px;background:#b8b8f0"></div>
<div class="a" style="left:5.5px;top:10.0px;width:20.5px;height:1px;background:#c0b0f0"></div>
<div class="a" style="left:5.5px;top:11.6px;width:22.3px;height:1px;background:#b8b8f0"></div>
<div class="a" style="left:5.5px;top:13.2px;width:21.1px;height:1px;background:#c0b0f0"></div>
<div class="a" style="left:3.0px;top:14.8px;width:4.3px;height:1px;background:#b0b0f0"></div>
<div class="a" style="left:3.0px;top:18.0px;width:25.4px;height:1px;background:#b8b8e8"></div>
<div class="a" style="left:5.5px;top:19.6px;width:55.2px;height:1px;background:#b8dcb8"></div>
<div class="a" style="left:5.5px;top:21.2px;width:19.2px;height:1px;background:#c8b0e0"></div>
<div class="a" style="left:5.5px;top:24.4px;width:48.4px;height:1px;background:#b8dcb8"></div>
<div class="a" style="left:5.5px;top:26.0px;width:17.4px;height:1px;background:#f0b8b8"></div>
<div class="a" style="left:5.5px;top:29.2px;width:26.7px;height:1px;background:#b8dcb8"></div>
<div class="a" style="left:5.5px;top:30.8px;width:26.0px;height:1px;background:#f0b8b8"></div>
<div class="a" style="left:5.5px;top:32.4px;width:28.5px;height:1px;background:#f0b8b8"></div>
<div class="a" style="left:5.5px;top:35.6px;width:55.2px;height:1px;background:#b8dcb8"></div>
<div class="a" style="left:5.5px;top:37.2px;width:55.2px;height:1px;background:#b8dcb8"></div>
<div class="a" style="left:5.5px;top:38.8px;width:37.2px;height:1px;background:#b8dcb8"></div>
<div class="a" style="left:5.5px;top:42.0px;width:18.6px;height:1px;background:#c8b0e0"></div>
<div class="a" style="left:5.5px;top:43.6px;width:24.8px;height:1px;background:#b8b8e8"></div>
<div class="a" style="left:5.5px;top:45.2px;width:21.7px;height:1px;background:#c8b0e0"></div>
<div class="a" style="left:5.5px;top:46.8px;width:23.6px;height:1px;background:#c8b0e0"></div>
<div class="a" style="left:5.5px;top:48.4px;width:22.3px;height:1px;background:#f0b8b8"></div>
 <div class="a" style="left:89px;top:8px;width:2px;height:36px;background:repeating-linear-gradient(#f4b0b0 0 1px,transparent 1px 6px)"></div>
</div>

<!-- status bar -->
<div class="a" style="left:0;top:595px;width:874px;height:25px;background:#005a8e"></div>
<svg width="874" height="620">
<circle cx="20" cy="607" r="7.5" fill="none" stroke="#dfe8f0" stroke-width="1.1"/>
<text x="20" y="611" font-family="Liberation Serif" font-size="10" fill="#e8eef4" text-anchor="middle">i</text>
<g fill="none" stroke="#e6e0dc" stroke-width="1.1">
<path d="M232.6,610.6 V599.6 H244.9 V601.8 H232.6"/>
<rect x="235.6" y="603.6" width="11.8" height="10.8"/>
<path d="M235.6,606.2 H247.4"/>
</g>
<g fill="#e6e0dc"><rect x="234" y="600.3" width="4.5" height="0.9"/><circle cx="239.6" cy="600.7" r="0.55"/><circle cx="241.6" cy="600.7" r="0.55"/><circle cx="243.6" cy="600.7" r="0.55"/>
<rect x="237" y="604.4" width="4.5" height="0.9"/><circle cx="242.6" cy="604.9" r="0.55"/><circle cx="244.6" cy="604.9" r="0.55"/><circle cx="246.4" cy="604.9" r="0.55"/></g>
<path d="M707.5,606 H713 L710.25,609 Z" fill="#e0e8f0"/>
<rect x="727" y="606" width="8" height="2" fill="#fff"/>
<rect x="743" y="607" width="84" height="1" fill="#fff"/>
<rect x="781" y="599" width="8" height="16" fill="#fff"/>
<rect x="835" y="606" width="8" height="2" fill="#fff"/>
<rect x="838" y="603" width="2" height="8" fill="#fff"/>
<g fill="#c8d8e8"><rect x="864" y="604" width="2" height="2"/><rect x="861" y="607" width="2" height="2"/><rect x="864" y="607" width="2" height="2"/><rect x="858" y="610" width="2" height="2"/><rect x="861" y="610" width="2" height="2"/><rect x="864" y="610" width="2" height="2"/></g>
</svg>
<div class="t" style="left:50px;top:603px;font-size:10.6px;color:#f0f0f0">1000 x 643</div>
<div class="t" style="left:125px;top:603px;font-size:10.7px;color:#f0f0f0">401,414</div>
<div class="t" style="left:252px;top:603px;font-size:12px;color:#f0f0f0">Multiple Applications</div>
<div class="t" style="left:675px;top:603px;font-size:10.3px;color:#e8eef4">100%</div>
</body></html>
